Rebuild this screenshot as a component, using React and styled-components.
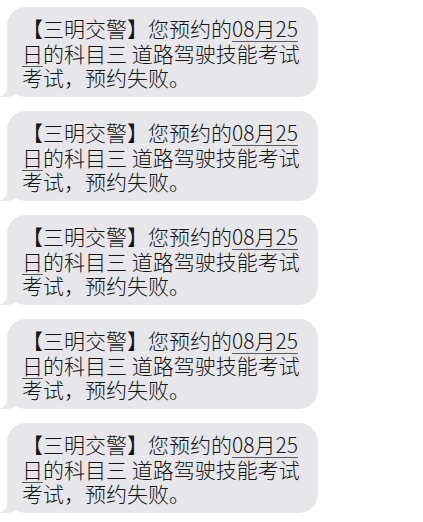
import React from "react";
import styled, { createGlobalStyle } from "styled-components";

const Global = createGlobalStyle`
  html, body { margin: 0; padding: 0; background: #ffffff; }
  body { font-family: "Noto Sans CJK SC", "Noto Sans", sans-serif; }
`;

const Thread = styled.div`
  display: flex;
  flex-direction: column;
  gap: 14px;
  padding: 7px 0 0 7px;
`;

const Bubble = styled.div`
  position: relative;
  box-sizing: border-box;
  width: 311px;
  min-height: 90px;
  padding: 9px 16px 7px 15px;
  background: #e6e6eb;
  border-radius: 19px;
  color: #141414;
  font-size: 21px;
  font-weight: 300;
  line-height: 24.5px;
  letter-spacing: 0;

  &::before {
    content: "";
    position: absolute;
    z-index: 0;
    bottom: 0;
    left: -7px;
    width: 22px;
    height: 22px;
    background: #e6e6eb;
    border-bottom-right-radius: 16px;
  }
  &::after {
    content: "";
    position: absolute;
    z-index: 1;
    bottom: 0;
    left: -10px;
    width: 10px;
    height: 22px;
    background: #ffffff;
    border-bottom-right-radius: 10px;
  }
`;

const Text = styled.p`
  position: relative;
  z-index: 2;
  margin: 0;
`;

const Link = styled.span`
  text-decoration: underline;
  text-decoration-thickness: 1px;
  text-underline-offset: 4px;
  text-decoration-color: #5a5a5a;
`;

const messages = Array.from({ length: 5 }, (_, i) => i);

export default function App() {
  return (
    <>
      <Global />
      <Thread>
        {messages.map((i) => (
          <Bubble key={i}>
            <Text>
              【三明交警】您预约的<Link>08月25日</Link>的科目三 道路驾驶技能考试考试，预约失败。
            </Text>
          </Bubble>
        ))}
      </Thread>
    </>
  );
}
